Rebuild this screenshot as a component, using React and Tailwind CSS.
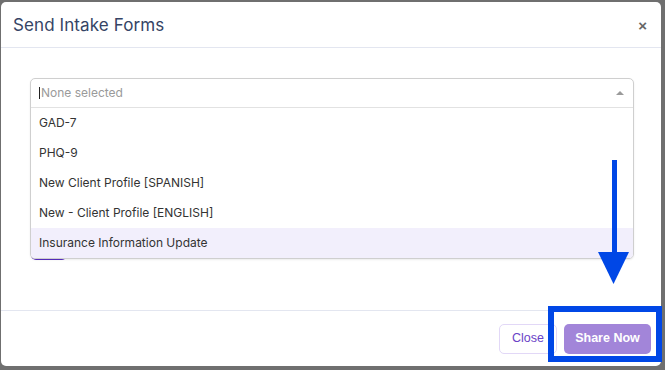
import React from "react";

const options = [
  "GAD-7",
  "PHQ-9",
  "New Client Profile [SPANISH]",
  "New - Client Profile [ENGLISH]",
  "Insurance Information Update",
];

export default function App() {
  return (
    <div className="w-[665px] h-[370px] bg-[#6f6f6f] relative overflow-hidden" style={{ fontFamily: "Inter, 'Noto Sans', sans-serif" }}>
      <div className="absolute left-[1px] top-[2px] w-[660px] h-[364px] bg-white rounded-[5px] flex flex-col">
        {/* header */}
        <div className="h-[46px] flex items-center justify-between pl-[12px] pr-[14px] pt-[2px] border-b border-[#e3e6f0] shrink-0">
          <h1 className="text-[17px] text-[#354465] font-normal tracking-[0.1px]">Send Intake Forms</h1>
          <span className="text-[15px] font-bold text-[#666] leading-none" style={{ fontFamily: "'Liberation Sans', Arial, sans-serif" }}>×</span>
        </div>
        {/* body */}
        <div className="relative flex-1 px-[29px] pt-[30px]">
          <div className="relative z-10 w-[604px] border border-[#cfcfcf] rounded-[5px] bg-white shadow-[0_1px_2px_rgba(0,0,0,0.08)] overflow-hidden">
            <div className="h-[29px] flex items-center pl-[8px] pr-[9px] border-b border-[#e2e2e2]">
              <span className="w-[1px] h-[12px] bg-[#222] mr-[1px]"></span>
              <span className="flex-1 text-[12px] text-[#9a9a9a]">None selected</span>
              <span className="w-0 h-0 border-l-[4px] border-r-[4px] border-b-[4px] border-l-transparent border-r-transparent border-b-[#9a9a9a]"></span>
            </div>
            {options.map((o, i) => (
              <div
                key={o}
                className={`h-[30px] flex items-center pl-[8px] text-[12px] text-[#333] ${i === options.length - 1 ? "bg-[#f2effc]" : "bg-white"}`}
              >
                {o}
              </div>
            ))}
          </div>
          <div className="absolute left-[30px] top-[182px] w-[36px] h-[30px] rounded-[5px] bg-[#5a2fc4]"></div>
        </div>
        {/* footer */}
        <div className="h-[56px] border-t border-[#e3e6f0] flex items-center justify-end gap-[7px] pr-[10px] shrink-0" style={{ fontFamily: "'Liberation Sans', Arial, sans-serif" }}>
          <button className="h-[30px] w-[58px] rounded-[5px] border border-[#e2d8f7] text-[#6a43c7] text-[12.5px] bg-white">Close</button>
          <button className="h-[30px] w-[87px] rounded-[5px] bg-[#a285d9] text-white text-[12.5px] font-bold">Share Now</button>
        </div>
      </div>

      {/* annotation: arrow */}
      <div className="absolute z-20 left-[612px] top-[160px] w-[5px] h-[96px] bg-[#0047e6]"></div>
      <svg className="absolute z-20 left-[598px] top-[252px]" width="31" height="32" viewBox="0 0 31 32">
        <polygon points="0,0 31,0 15.5,32" fill="#0047e6" />
      </svg>
      {/* annotation: box */}
      <div className="absolute z-20 left-[548px] top-[306px] w-[114px] h-[56px] border-[6px] border-[#0047e6]"></div>
    </div>
  );
}
